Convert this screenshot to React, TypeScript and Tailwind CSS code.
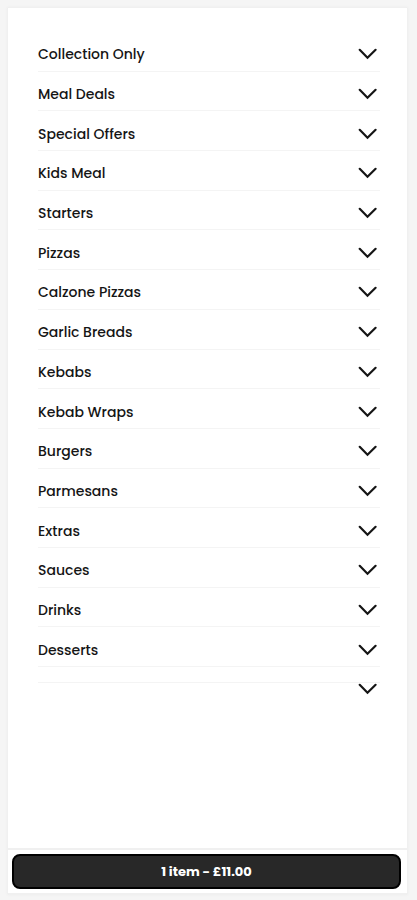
import { useState } from 'react';

const CATEGORIES = [
  'Collection Only',
  'Meal Deals',
  'Special Offers',
  'Kids Meal',
  'Starters',
  'Pizzas',
  'Calzone Pizzas',
  'Garlic Breads',
  'Kebabs',
  'Kebab Wraps',
  'Burgers',
  'Parmesans',
  'Extras',
  'Sauces',
  'Drinks',
  'Desserts',
];

function Chevron() {
  return (
    <svg viewBox="0 0 20 12" className="w-5 h-3 shrink-0" fill="none" stroke="#151515" strokeWidth="2.2" aria-hidden="true">
      <path d="M1.7 1.8 L9.5 9.8 L17.6 1.8" strokeLinecap="round" strokeLinejoin="miter" />
    </svg>
  );
}

export default function App() {
  const [open, setOpen] = useState<string | null>(null);

  const toggle = (name: string) => setOpen((prev) => (prev === name ? null : name));

  return (
    <div className="min-h-screen flex flex-col bg-[#f5f5f5] pt-2 pb-1.5 pl-2 pr-2.5 font-['Poppins','Inter',sans-serif] text-[#151515]">
      <main className="grow flex flex-col bg-white shadow-[0_0_2px_1px_#ededed]">
        <nav aria-label="Menu categories" className="grow pt-6 pl-[30px] pr-[27px]">
          <ul className="grid auto-rows-fr min-h-[635px]">
            {CATEGORIES.map((name) => (
              <li key={name} className="flex border-b border-[#f4f4f4]">
                <button
                  type="button"
                  aria-expanded={open === name}
                  onClick={() => toggle(name)}
                  className="w-full flex items-center justify-between pt-1.5 pr-0.5 text-sm leading-5 font-medium text-left cursor-pointer"
                >
                  {name}
                  <Chevron />
                </button>
              </li>
            ))}
          </ul>
          {/* category without a name */}
          <div className="h-4 flex items-start border-b border-[#f4f4f4]">
            <button
              type="button"
              aria-label="More"
              aria-expanded={open === ''}
              onClick={() => toggle('')}
              className="w-full flex justify-end pt-4 pr-0.5 cursor-pointer"
            >
              <span className="bg-white">
                <Chevron />
              </span>
            </button>
          </div>
        </nav>
        <footer className="border-t-2 border-b border-[#f0f0f0] pt-1 pb-1 pl-1 pr-1.5">
          <button
            type="button"
            className="w-full h-[35px] rounded-lg border-2 border-black bg-[#282828] text-white text-[13px] leading-5 font-bold cursor-pointer"
          >
            1 item - £11.00
          </button>
        </footer>
      </main>
    </div>
  );
}
